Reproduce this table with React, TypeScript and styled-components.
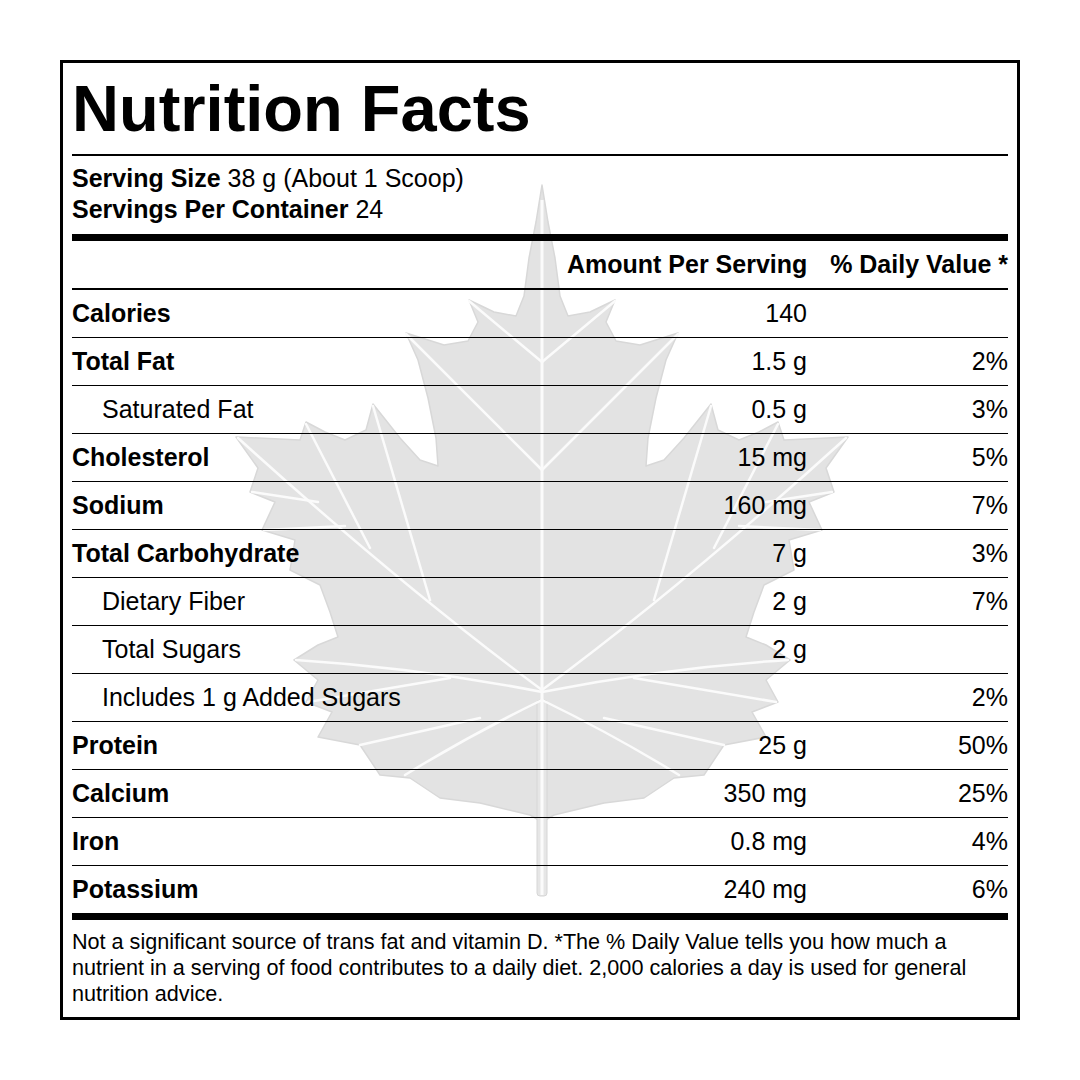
import React from "react";
import styled, { createGlobalStyle } from "styled-components";

const GlobalStyle = createGlobalStyle`
  html, body { margin: 0; padding: 0; background: #fff; }
  body { font-family: "Liberation Sans", Arial, Helvetica, sans-serif; color: #000; }
`;

const Page = styled.div`
  width: 1080px;
  height: 1080px;
  box-sizing: border-box;
  padding: 60px;
  background: #fff;
`;

const Label = styled.section`
  position: relative;
  width: 960px;
  box-sizing: border-box;
  border: 3px solid #000;
  padding: 13px 9px 10px;
`;

const Watermark = styled.svg`
  position: absolute;
  left: -3px;
  top: -3px;
  width: 960px;
  height: 960px;
  z-index: 0;
  pointer-events: none;
`;

const Content = styled.div`
  position: relative;
  z-index: 1;
`;

const Title = styled.h1`
  margin: 0 0 12px;
  font-size: 65px;
  line-height: 66px;
  font-weight: 700;
  letter-spacing: 0;
`;

const Serving = styled.div`
  border-top: 2px solid #000;
  border-bottom: 7px solid #000;
  padding: 7px 0 9px;
  font-size: 25px;
  line-height: 31px;
`;

const ServingLine = styled.div`
  white-space: nowrap;
`;

const Strong = styled.b`
  font-weight: 700;
`;

const Row = styled.div<{ $head?: boolean; $last?: boolean }>`
  display: grid;
  grid-template-columns: 1fr 240px 201px;
  align-items: center;
  height: 47px;
  font-size: 25px;
  border-bottom: ${(p) => (p.$last ? "7px" : p.$head ? "2px" : "1px")} solid #000;
  font-weight: ${(p) => (p.$head ? 700 : 400)};
`;

const Name = styled.div<{ $bold?: boolean; $indent?: boolean }>`
  font-weight: ${(p) => (p.$bold ? 700 : 400)};
  padding-left: ${(p) => (p.$indent ? "30px" : "0")};
  white-space: nowrap;
`;

const Num = styled.div`
  text-align: right;
  white-space: nowrap;
`;

const Footer = styled.p`
  margin: 0;
  padding-top: 9px;
  font-size: 21.6px;
  line-height: 26px;
`;

type Item = { name: string; amount: string; dv: string; bold?: boolean; indent?: boolean };

const items: Item[] = [
  { name: "Calories", amount: "140", dv: "", bold: true },
  { name: "Total Fat", amount: "1.5 g", dv: "2%", bold: true },
  { name: "Saturated Fat", amount: "0.5 g", dv: "3%", indent: true },
  { name: "Cholesterol", amount: "15 mg", dv: "5%", bold: true },
  { name: "Sodium", amount: "160 mg", dv: "7%", bold: true },
  { name: "Total Carbohydrate", amount: "7 g", dv: "3%", bold: true },
  { name: "Dietary Fiber", amount: "2 g", dv: "7%", indent: true },
  { name: "Total Sugars", amount: "2 g", dv: "", indent: true },
  { name: "Includes 1 g Added Sugars", amount: "", dv: "2%", indent: true },
  { name: "Protein", amount: "25 g", dv: "50%", bold: true },
  { name: "Calcium", amount: "350 mg", dv: "25%", bold: true },
  { name: "Iron", amount: "0.8 mg", dv: "4%", bold: true },
  { name: "Potassium", amount: "240 mg", dv: "6%", bold: true },
];

const CX = 542;

const leftHalf: [number, number][] = [
  [542, 185],
  [536, 222],
  [529, 258],
  [524, 296],
  [516, 316],
  [494, 312],
  [469, 300],
  [478, 322],
  [468, 341],
  [444, 345],
  [406, 333],
  [418, 360],
  [428, 398],
  [436, 438],
  [438, 466],
  [420, 460],
  [400, 438],
  [373, 404],
  [366, 430],
  [345, 440],
  [325, 432],
  [306, 422],
  [300, 440],
  [236, 437],
  [258, 468],
  [250, 492],
  [275, 502],
  [262, 530],
  [295, 540],
  [290, 570],
  [320, 585],
  [330, 612],
  [338, 637],
  [318, 645],
  [294, 660],
  [318, 680],
  [306, 702],
  [332, 712],
  [318, 737],
  [360, 745],
  [380, 775],
  [410, 778],
  [440, 798],
  [480, 803],
  [530, 815],
];

const mirror = (x: number) => CX * 2 - x;

const leafPath = (() => {
  const right = leftHalf
    .slice(1)
    .reverse()
    .map(([x, y]) => [mirror(x), y] as [number, number]);
  const pts = [...leftHalf, [CX, 822] as [number, number], ...right];
  return "M" + pts.map(([x, y]) => `${x} ${y}`).join(" L") + " Z";
})();

const veinLeft: string[] = [
  "M542 690 Q400 585 238 438",
  "M542 692 Q420 668 296 660",
  "M542 700 Q470 735 405 775",
  "M542 470 L406 334",
  "M542 362 L469 301",
  "M430 600 L373 406",
  "M370 548 L306 424",
  "M318 502 L252 492",
  "M345 526 L264 530",
  "M450 678 L308 702",
  "M480 718 L360 745",
];

const mirrorPath = (d: string) =>
  d.replace(/(-?\d+(?:\.\d+)?) (-?\d+(?:\.\d+)?)/g, (_m, x, y) => `${mirror(parseFloat(x))} ${y}`);

const veins = [...veinLeft, ...veinLeft.map(mirrorPath)];

function Leaf() {
  return (
    <Watermark viewBox="60 60 960 960" aria-hidden="true">
      <path d={leafPath} fill="#e3e3e3" stroke="#d8d8d8" strokeWidth={1.5} strokeLinejoin="round" />
      <rect x={CX - 5} y={700} width={10} height={196} rx={3} fill="#e6e6e6" stroke="#d6d6d6" strokeWidth={1} />
      <line x1={CX} y1={895} x2={CX} y2={200} stroke="#fbfbfb" strokeWidth={3} />
      {veins.map((d, i) => (
        <path key={i} d={d} fill="none" stroke="#fbfbfb" strokeWidth={2.5} strokeLinecap="round" />
      ))}
    </Watermark>
  );
}

export default function App() {
  return (
    <Page>
      <GlobalStyle />
      <Label>
        <Leaf />
        <Content>
          <Title>Nutrition Facts</Title>
          <Serving>
            <ServingLine>
              <Strong>Serving Size</Strong> 38 g (About 1 Scoop)
            </ServingLine>
            <ServingLine>
              <Strong>Servings Per Container</Strong> 24
            </ServingLine>
          </Serving>
          <Row $head>
            <Name />
            <Num>Amount Per Serving</Num>
            <Num>% Daily Value *</Num>
          </Row>
          {items.map((it, i) => (
            <Row key={it.name} $last={i === items.length - 1}>
              <Name $bold={it.bold} $indent={it.indent}>
                {it.name}
              </Name>
              <Num>{it.amount}</Num>
              <Num>{it.dv}</Num>
            </Row>
          ))}
          <Footer>
            Not a significant source of trans fat and vitamin D. *The % Daily Value tells you how much a nutrient in a
            serving of food contributes to a daily diet. 2,000 calories a day is used for general nutrition advice.
          </Footer>
        </Content>
      </Label>
    </Page>
  );
}
